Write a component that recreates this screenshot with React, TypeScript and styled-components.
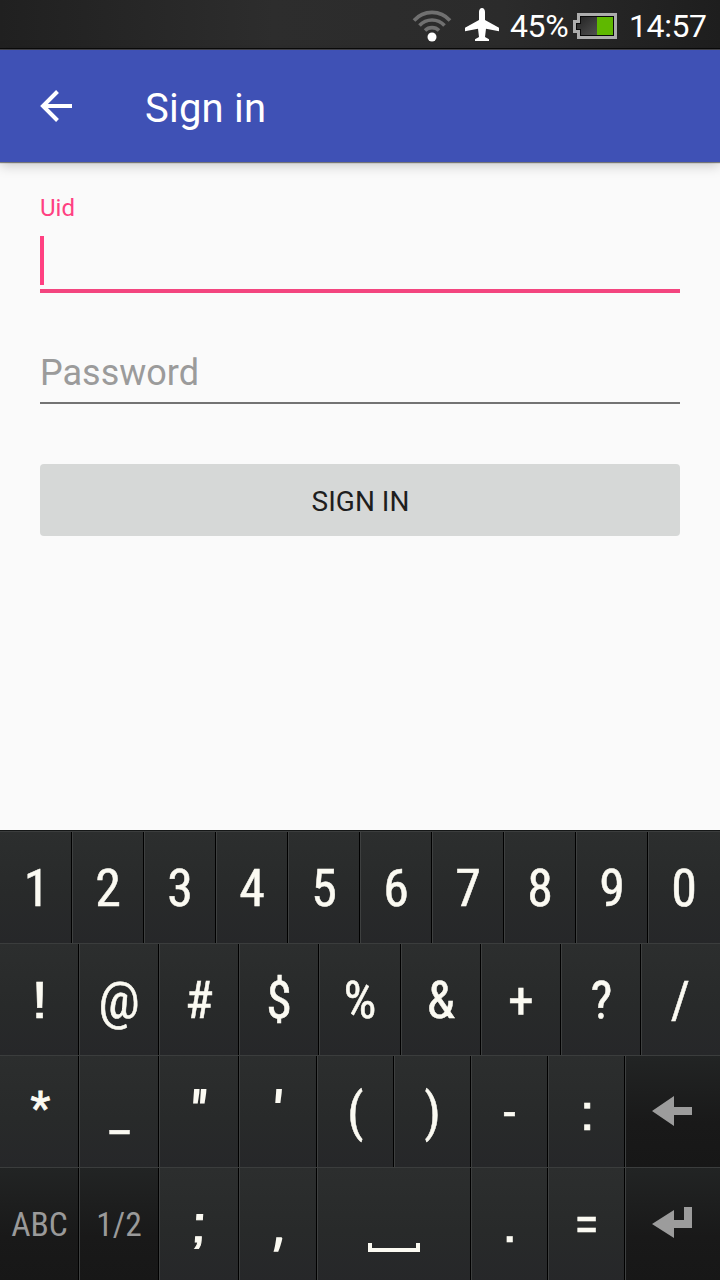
import React from "react";
import styled, { createGlobalStyle } from "styled-components";

const GlobalStyle = createGlobalStyle`
  * { box-sizing: border-box; }
  body { margin: 0; background: #fafafa; font-family: Roboto, "Liberation Sans", sans-serif; }
`;

const Screen = styled.div`
  width: 720px;
  height: 1280px;
  display: flex;
  flex-direction: column;
  background: #fafafa;
  overflow: hidden;
`;

const StatusBar = styled.header`
  height: 50px;
  flex: none;
  display: flex;
  align-items: center;
  justify-content: flex-end;
  padding: 0 12px 0 0;
  background: linear-gradient(90deg, #202020 0%, #2d2d2d 38%, #2b2b2b 70%, #1e1e1e 100%);
  border-bottom: 1px solid #46464c;
  box-shadow: inset 0 -1px 0 #0a0a0a;
  color: #fff;
`;

const StatusText = styled.span<{ $width: number }>`
  width: ${(p) => p.$width}px;
  font-size: 32px;
  line-height: 50px;
  padding: 2px 0 0 1px;
  letter-spacing: -0.4px;
  white-space: nowrap;
`;

const WifiIcon = styled.svg`margin-right: 12px;`;
const PlaneIcon = styled.svg`margin-right: 10px;`;
const BatteryIcon = styled.svg`margin: 2px 11px 0 5px;`;

const AppBar = styled.div`
  height: 112px;
  flex: none;
  display: flex;
  align-items: center;
  padding-left: 40px;
  background: #3f51b5;
  color: #fff;
  box-shadow: 0 1px 1px rgba(0, 0, 0, 0.45), 0 3px 12px rgba(0, 0, 0, 0.22);
`;

const BackIcon = styled.svg`margin-right: 73px;`;

const Title = styled.h1`
  margin: 6px 0 0;
  font-size: 40px;
  font-weight: 400;
  line-height: 48px;
  letter-spacing: 0.2px;
`;

const Form = styled.main`
  flex: 1;
  padding: 32px 40px 0;
`;

const FloatingLabel = styled.div`
  height: 42px;
  font-size: 24px;
  line-height: 28px;
  color: #ff4081;
`;

const Field = styled.div<{ $active?: boolean }>`
  display: flex;
  align-items: flex-start;
  height: ${(p) => (p.$active ? 57 : 56)}px;
  margin-top: ${(p) => (p.$active ? 0 : 55)}px;
  border-bottom: ${(p) => (p.$active ? "4px solid #f3457f" : "2px solid #737373")};
`;

const Caret = styled.span`
  width: 4px;
  height: 49px;
  background: #ff4081;
`;

const Placeholder = styled.span`
  font-size: 36px;
  line-height: 50px;
  color: #9b9b9b;
`;

const SubmitButton = styled.button`
  display: block;
  width: 100%;
  height: 72px;
  margin: 60px 0 0;
  padding: 3px 0 0 1px;
  border: 0;
  border-radius: 4px;
  background: #d6d8d7;
  color: #1e1e1e;
  font: 400 28px/34px Roboto, "Liberation Sans", sans-serif;
`;

const Keyboard = styled.section`
  flex: none;
  border-top: 1px solid #151717;
`;

const KeyRow = styled.div<{ $columns: string; $last?: boolean }>`
  display: grid;
  grid-template-columns: ${(p) => p.$columns};
  height: ${(p) => (p.$last ? 113 : 112)}px;
`;

const Key = styled.div<{ $dark?: boolean }>`
  display: flex;
  justify-content: center;
  align-items: flex-start;
  border-top: 1px solid #3b3d3d;
  border-left: 1px solid #3e4040;
  box-shadow: inset -1px -1px 0 #000;
  background: ${(p) =>
    p.$dark
      ? "linear-gradient(#222424, #191919 60%, #171717)"
      : "linear-gradient(#2c2e2e, #282a2a 55%, #262729)"};
  &:first-child { border-left: 0; }
  &:last-child { box-shadow: inset 0 -1px 0 #000; }
  ${KeyRow}:last-child & { box-shadow: inset -1px 0 0 #000; }
  ${KeyRow}:last-child &:last-child { box-shadow: none; }
`;

const Glyph = styled.span<{
  $small?: boolean;
  $face?: string;
  $size?: number;
  $x?: number;
  $y?: number;
  $sx?: number;
  $skew?: number;
  $stroke?: number;
}>`
  font-size: ${(p) => p.$size ?? (p.$small ? 33.5 : 52)}px;
  font-family: ${(p) => (p.$face ? `"${p.$face}", ` : "")}"Roboto Condensed", Roboto, sans-serif;
  font-stretch: 75%;
  line-height: 112px;
  color: ${(p) => (p.$small ? "#9a9a9a" : "#fbfaf2")};
  -webkit-text-stroke: ${(p) => p.$stroke ?? (p.$small ? 0 : 0.5)}px currentColor;
  transform: translate(${(p) => p.$x ?? -0.5}px, ${(p) => p.$y ?? 1}px)
    scaleX(${(p) => p.$sx ?? 1}) skewX(${(p) => p.$skew ?? 0}deg);
`;

const KeyIcon = styled.svg`
  width: 52px;
  height: 40px;
`;

const KeyIconWrap = styled.span<{ $top: number; $left?: number; $right?: number }>`
  display: flex;
  padding: ${(p) => p.$top}px ${(p) => p.$right ?? 0}px 0 ${(p) => p.$left ?? 0}px;
`;

type KeyDef = {
  label: string;
  dark?: boolean;
  face?: string;
  size?: number;
  x?: number;
  y?: number;
  sx?: number;
  skew?: number;
  stroke?: number;
  icon?: "space" | "delete" | "enter";
};

const plain = (label: string): KeyDef => ({ label });
const SQUARE = "Liberation Sans";

const rows: { columns: string; keys: KeyDef[] }[] = [
  {
    columns: "repeat(10, 72px)",
    keys: [{ label: "1", x: 0.5 }, ..."234567890".split("").map(plain)],
  },
  {
    columns: "79px repeat(3, 80px) 82px repeat(3, 80px) 79px",
    keys: [
      { label: "!", face: SQUARE, x: 0.5, y: 0, sx: 1.2 },
      { label: "@", x: -1, sx: 1.04 },
      ...["#", "$", "%", "&", "+"].map(plain),
      { label: "?", x: 0 },
      { label: "/" },
    ],
  },
  {
    columns: "79px 80px 80px 78px repeat(4, 77px) 95px",
    keys: [
      { label: "*", size: 46, x: 1, y: -4, stroke: 0.8 },
      { label: "_", x: 0, y: 1 },
      { label: "\"", x: -1, y: 0, skew: -4, stroke: 1.8 },
      { label: "'", x: -1, y: 0, skew: -4, stroke: 1.8 },
      { label: "(" },
      { label: ")" },
      { label: "-" },
      { label: ":", face: SQUARE, x: 0, y: 0, sx: 1.1 },
      { label: "", icon: "delete", dark: true },
    ],
  },
  {
    columns: "79px 80px 80px 78px 154px 77px 77px 95px",
    keys: [
      { label: "ABC", dark: true, x: 0 },
      { label: "1/2", dark: true },
      { label: ";", face: SQUARE, x: 0, y: 0, sx: 1.15, stroke: 0.9, skew: -3 },
      { label: ",", face: "Open Sans", x: 0, y: 0, stroke: 1.6 },
      { label: "", icon: "space" },
      { label: ".", face: SQUARE, x: -0.5, y: 0, sx: 1.1 },
      { label: "=" },
      { label: "", icon: "enter", dark: true },
    ],
  },
];

function KeyContent({ def }: { def: KeyDef }) {
  if (def.icon === "space")
    return (
      <KeyIconWrap $top={74} $right={2}>
        <KeyIcon viewBox="0 0 52 40"><path d="M0 1h4v5h44V1h4v9H0z" fill="#fbfaf2" /></KeyIcon>
      </KeyIconWrap>
    );
  if (def.icon === "delete")
    return (
      <KeyIconWrap $top={39} $left={10}>
        <KeyIcon viewBox="0 0 52 40"><path d="M0 16 22 1v11h18v8H22v11z" fill="#9c9c9c" /></KeyIcon>
      </KeyIconWrap>
    );
  if (def.icon === "enter")
    return (
      <KeyIconWrap $top={38} $left={10}>
        <KeyIcon viewBox="0 0 52 40"><path d="M0 18 22 4v10h10V1h8v21H22v10z" fill="#9c9c9c" /></KeyIcon>
      </KeyIconWrap>
    );
  return (
    <Glyph
      $small={def.dark}
      $face={def.face}
      $size={def.size}
      $x={def.x}
      $y={def.y}
      $sx={def.sx}
      $skew={def.skew}
      $stroke={def.stroke}
    >
      {def.label}
    </Glyph>
  );
}

export default function App() {
  return (
    <>
      <GlobalStyle />
      <Screen>
        <StatusBar>
          <WifiIcon width="42" height="34" viewBox="0 0 42 34" fill="none" stroke="#707070" strokeWidth="3.6">
            <path d="M3 12.500A24 24 0 0 1 39 12.500" />
            <path d="M8.500 17.500A17 17 0 0 1 33.500 17.500" />
            <path d="M14 22.500A10 10 0 0 1 28 22.500" />
            <circle cx="21" cy="29" r="4.500" fill="#fff" stroke="none" />
          </WifiIcon>
          <PlaneIcon width="34" height="34" viewBox="0 0 34 34" fill="#fff">
            <path d="M17 0c1.900 0 3 1.800 3 4v8l14 7.700v3.600l-13-2.600-1 8.300 4 2.200V33H10v-1.800l4-2.200-1-8.300L0 23.300v-3.600L14 12V4c0-2.200 1.100-4 3-4z" />
          </PlaneIcon>
          <StatusText $width={59}>45%</StatusText>
          <BatteryIcon width="44" height="26" viewBox="0 0 44 26">
            <defs>
              <linearGradient id="cell" x1="0" y1="0" x2="1" y2="1">
                <stop offset="0" stopColor="#222" />
                <stop offset="1" stopColor="#505050" />
              </linearGradient>
            </defs>
            <path d="M4 0h40v26H4v-6H0V7h4z" fill="#adadad" />
            <path d="M7 3h34v20H7v-6H3v-7h4z" fill="#080808" />
            <path d="M8 4h16v18H8v-6H4v-5h4z" fill="url(#cell)" />
            <path d="M24 4h16v18H24z" fill="#5fb800" />
          </BatteryIcon>
          <StatusText $width={80}>14:57</StatusText>
        </StatusBar>
        <AppBar>
          <BackIcon width="32" height="32" viewBox="0 0 32 32" fill="none" stroke="#fff" strokeWidth="4">
            <path d="M32 16H3M17.500 1.500 3 16l14.500 14.500" />
          </BackIcon>
          <Title>Sign in</Title>
        </AppBar>
        <Form>
          <FloatingLabel>Uid</FloatingLabel>
          <Field $active><Caret /></Field>
          <Field><Placeholder>Password</Placeholder></Field>
          <SubmitButton>SIGN IN</SubmitButton>
        </Form>
        <Keyboard>
          {rows.map((row, i) => (
            <KeyRow key={i} $columns={row.columns} $last={i === rows.length - 1}>
              {row.keys.map((def, j) => (
                <Key key={j} $dark={def.dark}><KeyContent def={def} /></Key>
              ))}
            </KeyRow>
          ))}
        </Keyboard>
      </Screen>
    </>
  );
}
